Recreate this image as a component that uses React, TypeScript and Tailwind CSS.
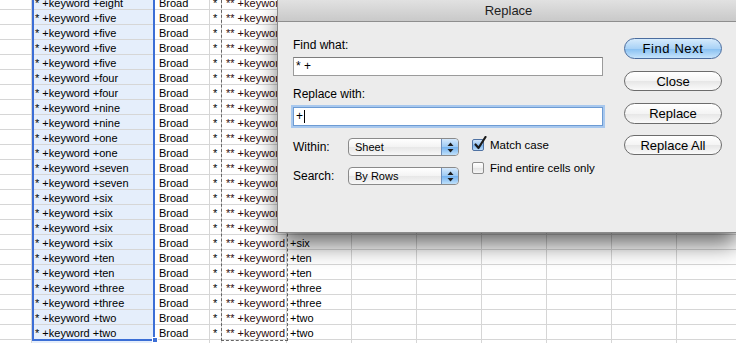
import React from "react";

const WORDS = [
  "eight", "five", "five", "five", "five", "four", "four", "nine", "nine", "one", "one",
  "seven", "seven", "six", "six", "six", "six", "ten", "ten", "three", "three", "two", "two",
];

// widths of the visible sheet columns, A..L
const COLS = [32, 123, 55, 12, 65, 65, 65, 65, 65, 65, 65, 65];

function Cell({ w, children, className = "" }: { w: number; children?: React.ReactNode; className?: string }) {
  return (
    <div
      className={`h-[15px] shrink-0 border-r border-b border-[#d6d6d6] pt-[2px] leading-[13px] whitespace-nowrap overflow-visible ${className}`}
      style={{ width: w }}
    >
      {children}
    </div>
  );
}

function Sheet() {
  return (
    <div className="-mt-[5px] flex flex-col text-[11px] text-black">
      {[...WORDS, ""].map((word, i) => (
        <div key={i} className="flex">
          <Cell w={COLS[0]} />
          <Cell w={COLS[1]} className="bg-[#e5eefb] pl-[3px]">
            {word && `* +keyword +${word}`}
          </Cell>
          <Cell w={COLS[2]} className="pl-[4px]">
            {word && "Broad"}
          </Cell>
          <Cell w={COLS[3]} className="pl-[3px]">
            {word && "*"}
          </Cell>
          <Cell w={COLS[4]} className="pl-[4px] text-[#2e0a0a]">
            {word && "** +keyword"}
          </Cell>
          <Cell w={COLS[5]} className="pl-[3px]">
            {word && `+${word}`}
          </Cell>
          {COLS.slice(6).map((w, j) => (
            <Cell key={j} w={w} />
          ))}
        </div>
      ))}
    </div>
  );
}

function Stepper() {
  return (
    <div className="w-[17px] h-full rounded-r-[3px] border-l border-[#6d8fbc] bg-[linear-gradient(#d4e8fc,#9ccaf4_50%,#74b2ef_51%,#bfe0fa)] flex items-center justify-center">
      <svg width="7" height="11" viewBox="0 0 7 11">
        <path d="M3.5 0.5 L6.5 4 L0.5 4 Z" fill="#1c1c1c" />
        <path d="M3.5 10.5 L6.5 7 L0.5 7 Z" fill="#1c1c1c" />
      </svg>
    </div>
  );
}

function Popup({ label }: { label: string }) {
  return (
    <div className="w-[111px] h-[18px] rounded-[4px] border border-[#8a8a8a] bg-[linear-gradient(#ffffff,#f3f3f3_50%,#e7e7e7_51%,#f7f7f7)] flex items-center overflow-hidden">
      <span className="flex-1 pl-[6px] text-[11px] text-black">{label}</span>
      <Stepper />
    </div>
  );
}

function Checkbox({ checked, label }: { checked?: boolean; label: string }) {
  return (
    <div className="flex items-center h-[12px]">
      <div
        className={`relative w-[12px] h-[12px] rounded-[2px] border ${
          checked
            ? "border-[#4f72a3] bg-[linear-gradient(#cfe4fb,#95c3f1_50%,#74b0ee_51%,#bcdcf9)]"
            : "border-[#8c8c8c] bg-[linear-gradient(#ffffff,#f0f0f0_50%,#e4e4e4_51%,#f6f6f6)]"
        }`}
      >
        {checked && (
          <svg className="absolute left-[1px] top-[-4px]" width="13" height="15" viewBox="0 0 13 15">
            <path d="M1.5 8.5 L4.5 12 L11.5 1" stroke="#1b1b1b" strokeWidth="2.2" fill="none" strokeLinecap="round" strokeLinejoin="round" />
          </svg>
        )}
      </div>
      <span className="ml-[6px] text-[11.5px] text-black leading-[12px]">{label}</span>
    </div>
  );
}

function PillButton({ label, primary, className = "" }: { label: string; primary?: boolean; className?: string }) {
  return (
    <button
      className={`w-[98px] rounded-full border text-[13px] text-black leading-none flex items-center justify-center ${
        primary
          ? "border-[#4a6c9e] bg-[linear-gradient(#d6ebfc,#a9d2f6_50%,#86bff1_51%,#c6e4fc)] tracking-[0.6px]"
          : "border-[#6c6c6c] bg-[linear-gradient(#ffffff,#f4f4f4_50%,#e6e6e6_51%,#fafafa)]"
      } ${className}`}
    >
      {label}
    </button>
  );
}

function ReplaceDialog() {
  return (
    <div className="absolute left-[277px] top-0 w-[462px] h-[233px] bg-[#ececec] border-l border-b border-[#8a8a8a] shadow-[0_13px_22px_-2px_rgba(0,0,0,0.6)]">
      {/* Title bar */}
      <div className="h-[22px] bg-[linear-gradient(#e1e1e1,#c9c9c9)] border-b border-[#8e8e8e] flex items-center justify-center text-[13px] text-[#1e1e1e]">
        Replace
      </div>

      <div className="flex pl-[15px]">
        {/* Fields */}
        <div className="w-[310px] flex flex-col">
          <div className="mt-[16px] h-[15px] leading-[15px] text-[12px] text-black">Find what:</div>
          <div className="mt-[4px] h-[19px] bg-white border border-[#9b9b9b] border-t-[#7d7d7d] pl-[2px] text-[12px] leading-[17px] text-black">
            * +
          </div>
          <div className="mt-[11px] h-[15px] leading-[15px] text-[12px] text-black">Replace with:</div>
          <div className="mt-[5px] h-[19px] bg-white border border-[#6d9bd3] shadow-[0_0_0_2px_#a8c8ee] pl-[2px] text-[12px] leading-[17px] text-black flex items-center">
            +<span className="ml-px w-px h-[13px] bg-black" />
          </div>

          <div className="mt-[12px] flex">
            <div className="flex flex-col">
              <div className="flex items-center h-[18px]">
                <span className="w-[55px] text-[12px] text-black">Within:</span>
                <Popup label="Sheet" />
              </div>
              <div className="flex items-center h-[18px] mt-[11px]">
                <span className="w-[55px] text-[12px] text-black">Search:</span>
                <Popup label="By Rows" />
              </div>
            </div>
            <div className="ml-[13px] mt-[1px] flex flex-col">
              <Checkbox checked label="Match case" />
              <div className="mt-[11px]">
                <Checkbox label="Find entire cells only" />
              </div>
            </div>
          </div>
        </div>

        {/* Buttons */}
        <div className="ml-[21px] flex flex-col">
          <PillButton primary label="Find Next" className="mt-[16px] h-[21px]" />
          <PillButton label="Close" className="mt-[12px] h-[20px]" />
          <PillButton label="Replace" className="mt-[12px] h-[21px]" />
          <PillButton label="Replace All" className="mt-[11px] h-[20px]" />
        </div>
      </div>
    </div>
  );
}

export default function App() {
  return (
    <div className="relative w-[736px] h-[343px] overflow-hidden bg-white font-['Liberation_Sans',Arial,sans-serif]">
      <Sheet />

      {/* column B selection */}
      <div className="absolute left-[32px] top-[-10px] w-[123px] h-[351px] border-2 border-[#3b6ed6]" />
      <div className="absolute left-[152px] top-[337px] w-[6px] h-[6px] bg-[#3b6ed6] border border-white" />

      {/* copy marquee around column E */}
      <div className="absolute left-[221px] top-[-10px] w-[67px] h-[351px] border border-dashed border-[#666]" />

      <ReplaceDialog />
    </div>
  );
}
